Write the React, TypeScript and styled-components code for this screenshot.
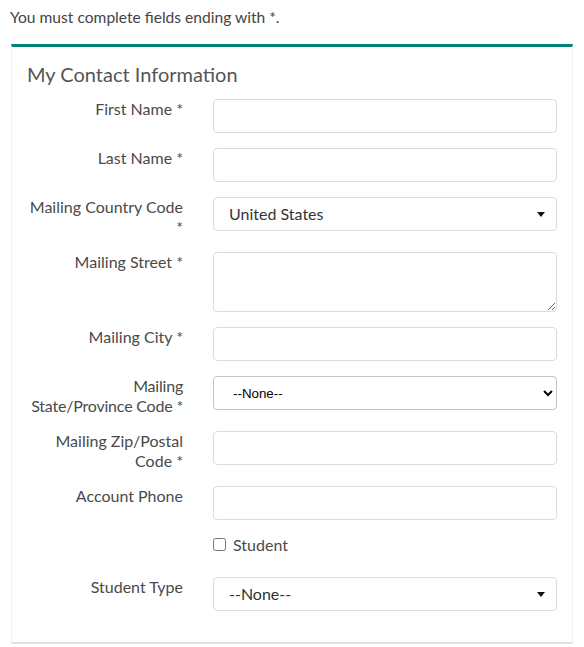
import styled, { createGlobalStyle } from 'styled-components';

const GlobalStyle = createGlobalStyle`
  body {
    margin: 0;
    background: #fff;
    font-family: Lato, 'Liberation Sans', sans-serif;
    color: #444;
  }
`;

const Page = styled.div`
  padding: 7px 11px 0 10px;
`;

const Notice = styled.p`
  margin: 0 0 17px;
  font-size: 15.6px;
  line-height: 20px;
  color: #444;
`;

const Panel = styled.section`
  margin-left: 1px;
  width: 562px;
  box-sizing: border-box;
  border-top: 3px solid #00827a;
  border-left: 1px solid #f0f0f0;
  border-right: 1px solid #f0f0f0;
  border-bottom: 2px solid #dde1e6;
  padding: 15px 15px 31px 15px;
`;

const Heading = styled.h2`
  margin: 0 0 13px;
  font-size: 20px;
  line-height: 24px;
  font-weight: 400;
  color: #555;
`;

const Form = styled.div`
  display: grid;
  grid-template-columns: 156px 1fr;
  column-gap: 30px;
  row-gap: 15px;
`;

const Label = styled.label<{ $tight?: boolean }>`
  display: flex;
  flex-direction: column;
  align-items: flex-end;
  white-space: nowrap;
  font-size: 16px;
  line-height: 20px;
  letter-spacing: ${(p) => (p.$tight ? '-0.2px' : 'normal')};
  color: #4a4a4a;
`;

const fieldBase = `
  box-sizing: border-box;
  width: 100%;
  border: 1px solid #dcdcdc;
  border-radius: 4px;
  background: #fff;
  font-family: Lato, 'Liberation Sans', sans-serif;
  font-size: 16px;
  color: #333;
  margin: 0;
`;

const TextInput = styled.input`
  ${fieldBase}
  height: 34px;
  padding: 0 15px;
`;

const TextArea = styled.textarea`
  ${fieldBase}
  display: block;
  height: 60px;
  padding: 6px 15px;
  resize: vertical;
`;

const SelectBox = styled.div`
  ${fieldBase}
  height: 34px;
  display: flex;
  align-items: center;
  padding: 0 16px 0 15px;
`;

const SelectValue = styled.span`
  flex: 1;
  line-height: 20px;
`;

const Caret = styled.span`
  width: 0;
  height: 0;
  border-left: 4px solid transparent;
  border-right: 4px solid transparent;
  border-top: 5px solid #111;
  margin-right: -5px;
`;

const NativeSelect = styled.select`
  box-sizing: border-box;
  width: 100%;
  height: 34px;
  margin: 0;
  padding: 0 12px 0 15px;
  border: 1px solid #c4c4c4;
  border-radius: 4px;
  background: #fff;
  font-family: Arial, 'Liberation Sans', sans-serif;
  font-size: 13.33px;
  color: #000;
`;

const CheckRow = styled.div`
  grid-column: 2;
  display: flex;
  align-items: center;
  gap: 7px;
  height: 27px;
  padding-bottom: 8px;
  box-sizing: border-box;
  font-size: 16px;
  color: #4a4a4a;
`;

const Check = styled.input`
  margin: 0;
  width: 13px;
  height: 13px;
`;

const FakeSelect = ({ value }: { value: string }) => (
  <SelectBox>
    <SelectValue>{value}</SelectValue>
    <Caret />
  </SelectBox>
);

const App = () => (
  <Page>
    <GlobalStyle />
    <Notice>You must complete fields ending with *.</Notice>
    <Panel>
      <Heading>My Contact Information</Heading>
      <Form>
        <Label>First Name *</Label>
        <TextInput type="text" />
        <Label>Last Name *</Label>
        <TextInput type="text" />
        <Label>
          <span>Mailing Country Code</span>
          <span>*</span>
        </Label>
        <FakeSelect value="United States" />
        <Label>Mailing Street *</Label>
        <TextArea />
        <Label>Mailing City *</Label>
        <TextInput type="text" />
        <Label $tight>
          <span>Mailing</span>
          <span>State/Province Code *</span>
        </Label>
        <NativeSelect defaultValue="">
          <option value="">--None--</option>
        </NativeSelect>
        <Label>
          <span>Mailing Zip/Postal</span>
          <span>Code *</span>
        </Label>
        <TextInput type="text" />
        <Label>Account Phone</Label>
        <TextInput type="text" />
        <CheckRow>
          <Check type="checkbox" id="student" />
          <label htmlFor="student">Student</label>
        </CheckRow>
        <Label>Student Type</Label>
        <FakeSelect value="--None--" />
      </Form>
    </Panel>
  </Page>
);

export default App;
